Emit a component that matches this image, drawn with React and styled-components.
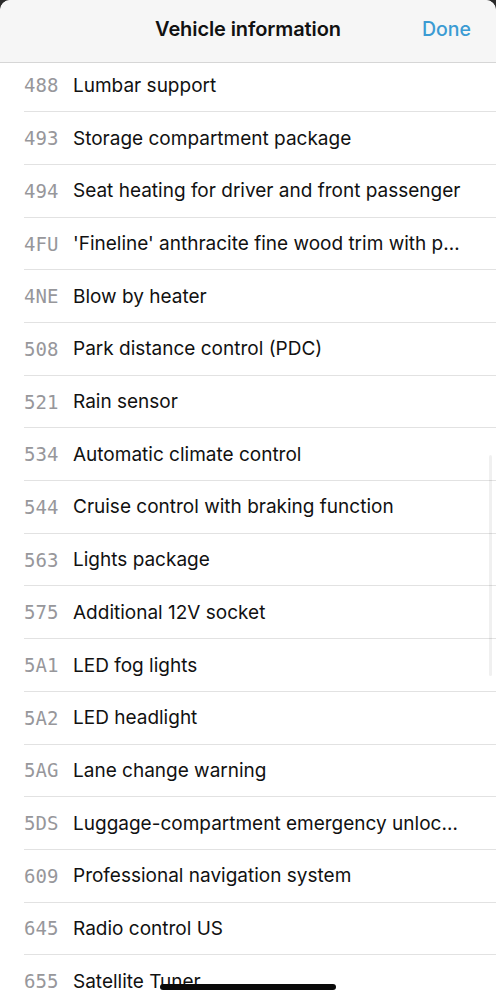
import React from "react";
import styled, { createGlobalStyle } from "styled-components";

const GlobalStyle = createGlobalStyle`
	html, body {
		margin: 0;
		padding: 0;
		background: #2b2b2b;
	}
	* {
		box-sizing: border-box;
	}
`;

const options = [
	["488", "Lumbar support"],
	["493", "Storage compartment package"],
	["494", "Seat heating for driver and front passenger"],
	["4FU", "'Fineline' anthracite fine wood trim with pearl chrome accent strips"],
	["4NE", "Blow by heater"],
	["508", "Park distance control (PDC)"],
	["521", "Rain sensor"],
	["534", "Automatic climate control"],
	["544", "Cruise control with braking function"],
	["563", "Lights package"],
	["575", "Additional 12V socket"],
	["5A1", "LED fog lights"],
	["5A2", "LED headlight"],
	["5AG", "Lane change warning"],
	["5DS", "Luggage-compartment emergency unlocking"],
	["609", "Professional navigation system"],
	["645", "Radio control US"],
	["655", "Satellite Tuner"],
];

const Sheet = styled.div`
	position: relative;
	width: 496px;
	height: 1000px;
	overflow: hidden;
	background: #ffffff;
	border-radius: 10px 10px 0 0;
	font-family: Inter, "Noto Sans", sans-serif;
`;

const NavBar = styled.header`
	position: sticky;
	top: 0;
	z-index: 2;
	display: grid;
	grid-template-columns: 1fr auto 1fr;
	align-items: center;
	height: 63px;
	padding: 0 25px 4px;
	background: #f6f6f6;
	border-bottom: 1px solid #d6d6d6;
	border-radius: 10px 10px 0 0;
`;

const Title = styled.h1`
	grid-column: 2;
	margin: 0;
	font-size: 20px;
	font-weight: 600;
	color: #111111;
	letter-spacing: -0.1px;
`;

const DoneButton = styled.button`
	grid-column: 3;
	justify-self: end;
	border: none;
	background: none;
	padding: 0;
	font-family: inherit;
	font-size: 19.5px;
	font-weight: 500;
	color: #3b9bd3;
	cursor: pointer;
`;

const List = styled.ul`
	list-style: none;
	margin: -3.4px 0 0;
	padding: 0;
`;

const Row = styled.li`
	display: flex;
	align-items: center;
	height: 52.7px;
	margin-left: 24px;
	padding-right: 30px;
	border-bottom: 1px solid #e2e2e2;
`;

const Code = styled.span`
	flex-shrink: 0;
	width: 49px;
	font-family: "DejaVu Sans Mono", "Liberation Mono", monospace;
	font-size: 19px;
	color: #97979b;
`;

const Label = styled.span`
	flex: 1;
	min-width: 0;
	overflow: hidden;
	white-space: nowrap;
	text-overflow: ellipsis;
	font-size: 19px;
	color: #111111;
`;

const ScrollIndicator = styled.div`
	position: absolute;
	right: 4px;
	top: 455px;
	width: 3px;
	height: 221px;
	border-radius: 2px;
	background: rgba(0, 0, 0, 0.06);
`;

const HomeIndicator = styled.div`
	position: absolute;
	left: 160px;
	top: 984px;
	width: 176px;
	height: 6px;
	border-radius: 3px;
	background: #0a0a0a;
`;

const App = () => {
	return (
		<>
			<GlobalStyle />
			<Sheet>
				<NavBar>
					<Title>Vehicle information</Title>
					<DoneButton type="button">Done</DoneButton>
				</NavBar>
				<List>
					{options.map(([code, label]) => (
						<Row key={code}>
							<Code>{code}</Code>
							<Label>{label}</Label>
						</Row>
					))}
				</List>
				<ScrollIndicator />
				<HomeIndicator />
			</Sheet>
		</>
	);
};

export default App;
